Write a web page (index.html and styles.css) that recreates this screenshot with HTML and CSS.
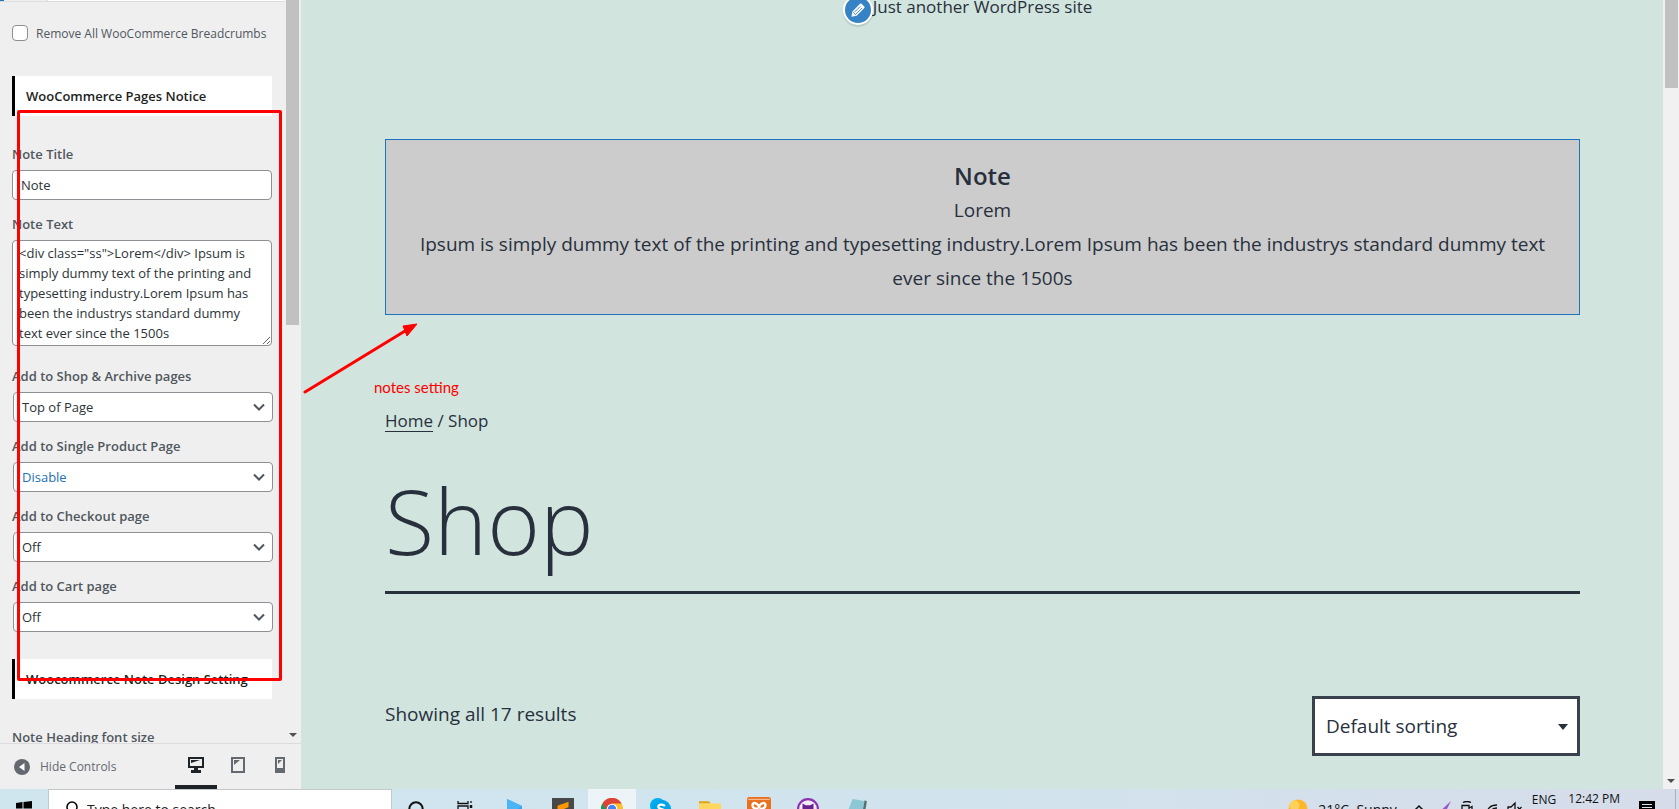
FILE: index.html
```html
<!DOCTYPE html>
<html lang="en">
<head>
<meta charset="utf-8">
<title>Customizer: Shop</title>
<link rel="stylesheet" href="styles.css">
</head>
<body>
<div class="workspace">
  <aside class="sidebar">
    <div class="panel">
      <form class="controls">
        <div class="panel-head"><span class="panel-accent"></span><span class="panel-back"></span><span class="panel-title"></span></div>
        <label class="check"><input type="checkbox" class="checkbox">Remove All WooCommerce Breadcrumbs</label>
        <h3 class="section">WooCommerce Pages Notice</h3>
        <div class="field">
          <label for="note-title">Note Title</label>
          <input id="note-title" class="box" type="text" value="Note">
        </div>
        <div class="field field-area">
          <label for="note-text">Note Text</label>
          <textarea id="note-text" class="box area" rows="5">&lt;div class="ss"&gt;Lorem&lt;/div&gt; Ipsum is simply dummy text of the printing and typesetting industry.Lorem Ipsum has been the industrys standard dummy text ever since the 1500s</textarea>
        </div>
        <div class="field">
          <label for="shop-pages">Add to Shop &amp; Archive pages</label>
          <div class="picker"><select id="shop-pages" class="box"><option>Top of Page</option></select><svg class="chevron" viewBox="0 0 12 8"><path d="M1 1.5l5 5 5-5"/></svg></div>
        </div>
        <div class="field">
          <label for="single-page">Add to Single Product Page</label>
          <div class="picker"><select id="single-page" class="box active"><option>Disable</option></select><svg class="chevron" viewBox="0 0 12 8"><path d="M1 1.5l5 5 5-5"/></svg></div>
        </div>
        <div class="field">
          <label for="checkout-page">Add to Checkout page</label>
          <div class="picker"><select id="checkout-page" class="box"><option>Off</option></select><svg class="chevron" viewBox="0 0 12 8"><path d="M1 1.5l5 5 5-5"/></svg></div>
        </div>
        <div class="field">
          <label for="cart-page">Add to Cart page</label>
          <div class="picker"><select id="cart-page" class="box"><option>Off</option></select><svg class="chevron" viewBox="0 0 12 8"><path d="M1 1.5l5 5 5-5"/></svg></div>
        </div>
        <h3 class="section">Woocommerce Note Design Setting</h3>
        <div class="field"><label for="heading-size">Note Heading font size</label><input id="heading-size" class="box" type="number"></div>
      </form>
      <div class="scroll"><div class="thumb thumb-panel"></div><svg class="scroll-down" viewBox="0 0 8 4"><path d="M0 0h8L4 4z"/></svg></div>
    </div>
    <footer class="footer">
      <button class="hide" type="button">
        <svg viewBox="0 0 16 16" width="16" height="16"><circle cx="8" cy="8" r="8" fill="#646970"/><path d="M10.500 4v8L5 8z" fill="#fff"/></svg>
        Hide Controls
      </button>
      <div class="devices">
        <button class="device current" type="button" aria-label="Desktop"><svg viewBox="0 0 16 16" width="16" height="16"><path fill="currentColor" fill-rule="evenodd" d="M0 0h16v11h-6v2h3v3H3v-3h3v-2H0zM2 2v7h12V2z"/><path fill="currentColor" d="M3 3h9L3 6z"/></svg></button>
        <button class="device" type="button" aria-label="Tablet"><svg viewBox="0 0 14 16" width="14" height="16"><path fill="currentColor" fill-rule="evenodd" d="M0 0h14v16H0zM2 2v12h10V2z"/><path fill="currentColor" d="M3 3h6L3 8z"/></svg></button>
        <button class="device" type="button" aria-label="Mobile"><svg viewBox="0 0 10 16" width="10" height="16"><path fill="currentColor" fill-rule="evenodd" d="M0 0h10v16H0zM2 2v9h6V2z"/><path fill="currentColor" d="M3 3h4L3 7z"/></svg></button>
      </div>
    </footer>
  </aside>
  <main class="preview">
    <div class="page">
      <p class="tagline"><span class="tagline-text"><button class="edit" type="button" aria-label="Edit tagline"><svg viewBox="0 0 20 20" width="18" height="18"><path fill="#fff" d="M13.900 3l3.100 3.100c.5.500.5 1.200 0 1.700L8.500 16.300 2.700 17.500l1.100-5.700L12.300 3c.4-.4 1.200-.4 1.600 0z"/><path d="M6 12.500l6.500-6.500M7.900 14.300l6.500-6.500M4.500 12.500l3.300 3.200" stroke="#3582c4" stroke-width="1" fill="none"/></svg></button>Just another WordPress site</span></p>
      <section class="notice">
        <h2 class="notice-title">Note</h2>
        <div>Lorem</div>
        Ipsum is simply dummy text of the printing and typesetting industry.Lorem Ipsum has been the industrys standard dummy text ever since the 1500s
      </section>
      <nav class="crumbs"><a href="#home">Home</a> / Shop</nav>
      <h1 class="title">Shop</h1>
      <div class="toolbar">
        <p class="count">Showing all 17 results</p>
        <div class="picker sort"><select class="sort-select" aria-label="Sort products"><option>Default sorting</option></select><svg class="caret" viewBox="0 0 10 6"><path d="M0 0h10L5 6z"/></svg></div>
      </div>
    </div>
    <div class="scroll scroll-page"><div class="thumb thumb-page"></div><svg class="scroll-down" viewBox="0 0 8 4"><path d="M0 0h8L4 4z"/></svg></div>
  </main>
</div>
<div class="taskbar">
  <div class="tasks">
    <button class="task start" type="button" aria-label="Start"><svg viewBox="0 0 16 16" width="16" height="16"><path d="M0 2l6.500-1v6.500H0zM7.500 1L16 0v7.500H7.500zM0 8.500h6.500V15L0 14zM7.500 8.500H16V16l-8.500-1z"/></svg></button>
    <div class="search"><svg viewBox="0 0 16 16" width="16" height="16" fill="none" stroke="#000" stroke-width="1.500"><circle cx="8" cy="6" r="5"/><path d="M5 10l-4 5"/></svg><input type="text" placeholder="Type here to search" aria-label="Search"></div>
    <button class="task" type="button" aria-label="Cortana"><svg viewBox="0 0 16 16" width="16" height="16"><circle cx="8" cy="8" r="6.700" fill="none" stroke="#111" stroke-width="2"/></svg></button>
    <button class="task" type="button" aria-label="Task view"><svg viewBox="0 0 16 16" width="16" height="16" fill="none" stroke="#111" stroke-width="1.300"><path d="M1 0v2.500h10V0M1 16v-2.500h10V16M1 5h10v6H1zM14 0v2M14 9v7"/><path d="M14 4v3" stroke-width="2.500"/></svg></button>
    <button class="task" type="button" aria-label="Code editor"><svg viewBox="0 0 20 20" width="20" height="20"><path d="M3 0l15 7v11L3 20z" fill="#35a7f0"/><path d="M3 0l15 7L3 16z" fill="#4db5f5"/></svg></button>
    <button class="task" type="button" aria-label="Text editor"><svg viewBox="0 0 20 20" width="22" height="22"><path d="M0 0h20v20H0z" fill="#484848"/><path d="M15 3.500v5L5 12V7zM5 10l10 3v4L5 18z" fill="#ff9800"/></svg></button>
    <button class="task open" type="button" aria-label="Browser"><svg viewBox="0 0 20 20" width="22" height="22"><circle cx="10" cy="10" r="10" fill="#fbc02d"/><path d="M1.300 5A10 10 0 0 1 18.700 5H10l-4 8z" fill="#db4437"/><path d="M1.300 5A10 10 0 0 0 10 20l4-8H6z" fill="#0f9d58"/><circle cx="10" cy="10" r="4.800" fill="#fff"/><circle cx="10" cy="10" r="3.800" fill="#4285f4"/></svg></button>
    <button class="task" type="button" aria-label="Skype"><svg viewBox="0 0 20 20" width="22" height="22"><circle cx="7" cy="7" r="7" fill="#00aff0"/><circle cx="13" cy="13" r="7" fill="#0091d8"/><circle cx="10.500" cy="10" r="8.500" fill="#00a5e8"/><path d="M13.500 7.500c-1-2-6-2-6 .500s6 1.500 6 4-5 3-6.500.5" stroke="#fff" stroke-width="2" fill="none"/></svg></button>
    <button class="task" type="button" aria-label="Files"><svg viewBox="0 0 20 20" width="22" height="22"><path d="M0 3h9l2 2H0z" fill="#e2a40b"/><path d="M0 5h20v13H0z" fill="#ffd75e"/></svg></button>
    <button class="task" type="button" aria-label="XAMPP"><svg viewBox="0 0 20 20" width="24" height="24"><rect width="20" height="20" rx="2" fill="#e8701f"/><path d="M1 2h18" stroke="#f8b98e"/><path d="M9.500 10C3 10 4 4.500 6.500 5S10 8 10 9.500C10 8 11 5.500 13.500 5s3.500 5-3 5c5 0 5 5 2.500 5s-3-3-3-4.500c0 1.500-.5 4.500-3 4.500s-2.500-5 2.500-5z" fill="none" stroke="#fff" stroke-width="2"/></svg></button>
    <button class="task" type="button" aria-label="GitHub Desktop"><svg viewBox="0 0 20 20" width="22" height="22"><circle cx="10" cy="10" r="9" fill="#f4edf9" stroke="#8a32b0" stroke-width="2"/><path d="M5 5l3 1.500h4L15 5v6c0 3-2 4-3 4v5H8v-5c-2 0-3-2-3-4z" fill="#6a2290"/></svg></button>
    <button class="task" type="button" aria-label="Notepad"><svg viewBox="0 0 20 20" width="22" height="22"><path d="M6 1l12 2-4 17L0 16z" fill="#8bc7d4"/><path d="M17 2l2 1-3 17-2-1z" fill="#55706d"/></svg></button>
  </div>
  <div class="tray">
    <svg class="sun" viewBox="0 0 20 20" width="20" height="20"><circle cx="10" cy="10" r="9.500" fill="#ffb629"/><circle cx="6.500" cy="6.500" r="5" fill="#ffd257"/></svg>
    <span class="weather">21°C&nbsp; Sunny</span>
    <div class="tray-icons">
      <svg viewBox="0 0 16 16" width="16" height="16" fill="none" stroke="#111" stroke-width="1.500"><path d="M3 10l5-5 5 5"/></svg>
      <svg viewBox="0 0 16 16" width="16" height="16"><path d="M16 0L1 14h8z" fill="#9559c7"/></svg>
      <svg viewBox="0 0 16 16" width="16" height="16" fill="none" stroke="#111" stroke-width="1.300"><path d="M4 1.500q4-2 8 0M3 4.500h7v9H3zM10 7l3-1.500v7L10 11"/></svg>
      <svg viewBox="0 0 16 16" width="16" height="16" fill="none" stroke="#111" stroke-width="1.300"><path d="M4 14Q4 4 14 4M7 14q0-7 7-7M10 14q0-4 4-4"/></svg>
      <svg viewBox="0 0 16 16" width="16" height="16" fill="none" stroke="#111" stroke-width="1.300"><path d="M1 6h3l4-4v12l-4-4H1zM10.500 6l4 4M14.500 6l-4 4"/></svg>
    </div>
    <span class="lang">ENG</span>
    <span class="clock">12:42 PM</span>
    <svg class="messages" viewBox="0 0 16 16" width="16" height="16"><path d="M0 0h16v12H9l-4 4v-4H0z"/><path d="M3 3.500h10M3 6.500h10M3 9.500h7" stroke="#dce3f0"/></svg>
    <span class="peek"></span>
  </div>
</div>
<div class="mark-frame"></div>
<svg class="mark-arrow" viewBox="0 0 116 72" width="116" height="72"><path d="M2 70L102 9" stroke="#f00" stroke-width="3" stroke-linecap="round"/><path d="M114 2l-14 2 2 5 2 5z" fill="#f00" stroke="#f00"/></svg>
<div class="mark-text">notes setting</div>
</body>
</html>
```
FILE: styles.css
```css
* { box-sizing: border-box; }
body {
  margin: 0;
  height: 100vh;
  display: flex;
  flex-direction: column;
  overflow: hidden;
  position: relative;
  font-family: "Open Sans", "Noto Sans", sans-serif;
  font-size: 13px;
}
h1, h2, h3, p { margin: 0; }
button, input, select, textarea { font: inherit; margin: 0; }
button { border: 0; padding: 0; background: none; }

.workspace { flex: 1; min-height: 0; display: flex; }

/* Sidebar */
.sidebar {
  flex: 0 0 301px;
  min-width: 0;
  display: flex;
  flex-direction: column;
  background: #efefef;
  color: #50575e;
}
.panel { flex: 1; min-height: 0; display: flex; overflow: hidden; }
.controls { flex: 1; min-width: 0; padding: 0 14px 0 12px; }
.panel-head {
  display: flex;
  height: 2px;
  margin: 0 -12px 23px;
  border-bottom: 1px solid #dcdcde;
  background: #fff;
}
.panel-accent { width: 4px; background: #2271b1; }
.panel-back { width: 44px; background: #efefef; border-right: 1px solid #dcdcde; }
.check {
  display: flex;
  align-items: center;
  gap: 8px;
  height: 16px;
  margin-bottom: 35px;
  font-size: 12px;
  white-space: nowrap;
}
.checkbox {
  appearance: none;
  flex: none;
  width: 16px;
  height: 16px;
  border: 1px solid #8c8f94;
  border-radius: 4px;
  background: #fff;
}
.section {
  margin-bottom: 28px;
  padding: 10px 11px;
  border-left: 3px solid #000;
  background: #fff;
  color: #1d1f22;
  font-size: 13px;
  font-weight: 600;
  line-height: 20px;
  white-space: nowrap;
}
.field {
  display: flex;
  flex-direction: column;
  gap: 6px;
  margin-bottom: 14px;
  font-size: 13px;
  line-height: 20px;
}
.field label { font-weight: 600; }
.field + .section { margin-top: 27px; }
.field-area { margin-bottom: 20px; }
.box {
  width: 100%;
  height: 30px;
  padding: 0 8px;
  border: 1px solid #8c8f94;
  border-radius: 4px;
  background: #fff;
  color: #2c3338;
}
.area { height: 106px; padding: 2px 6px; line-height: 20px; overflow: hidden; resize: vertical; }
.picker { position: relative; display: flex; }
.field .picker { margin: 0 -1px 0 1px; }
.picker select { appearance: none; }
.picker .active { color: #2271b1; }
.chevron {
  position: absolute;
  right: 8px;
  top: 11px;
  width: 12px;
  height: 8px;
  fill: none;
  stroke: #50575e;
  stroke-width: 2;
  pointer-events: none;
}
.scroll {
  flex: 0 0 15px;
  display: flex;
  flex-direction: column;
  justify-content: space-between;
  align-items: center;
  padding: 0 2px 6px 0;
}
.thumb { width: 13px; background: #c1c1c1; }
.thumb-panel { height: 325px; }
.scroll-down { width: 8px; height: 4px; fill: #505050; }

.footer {
  display: flex;
  justify-content: space-between;
  height: 46px;
  border-top: 1px solid #dcdcde;
}
.hide { display: flex; align-items: center; gap: 10px; padding-left: 14px; color: #646970; font-size: 12px; white-space: nowrap; }
.devices { display: flex; }
.device {
  display: grid;
  place-items: center;
  width: 42px;
  border-bottom: 4px solid transparent;
  color: #646970;
}
.current { color: #1d2327; border-color: #1d2327; }

/* Store preview */
.preview {
  flex: 1;
  min-width: 0;
  display: flex;
  background: #d1e4dd;
  color: #28303d;
}
.page { flex: 1; min-width: 0; padding: 0 83px 0 84px; overflow: hidden; }
.tagline { font-size: 17px; line-height: 14px; text-align: center; }
.tagline-text { position: relative; }
.edit {
  position: absolute;
  right: 100%;
  top: 0;
  display: grid;
  place-items: center;
  width: 30px;
  height: 30px;
  border: 2px solid #fff;
  border-radius: 50%;
  background: #3582c4;
  box-shadow: 0 2px 1px rgba(46, 68, 83, 0.15);
}
.notice {
  margin-top: 125px;
  padding: 19px 24px;
  border: 1px solid #1e73be;
  background: #ccc;
  font-size: 19px;
  line-height: 34px;
  text-align: center;
}
.notice-title { font-size: 24px; font-weight: 600; line-height: 34px; }
.crumbs { margin-top: 91px; font-size: 17px; line-height: 30px; }
.crumbs a { color: inherit; text-underline-offset: 4px; text-decoration-thickness: 1px; }
.title {
  margin-top: 28px;
  padding-bottom: 15px;
  border-bottom: 3px solid #28303d;
  font-size: 90px;
  font-weight: 300;
  line-height: 112px;
}
.toolbar { display: flex; justify-content: space-between; margin-top: 102px; }
.count { font-size: 19px; line-height: 36px; }
.sort { width: 268px; }
.sort-select {
  width: 100%;
  height: 60px;
  padding: 0 11px;
  border: 3px solid #39414d;
  border-radius: 0;
  background: #fff;
  color: #28303d;
  font-size: 19px;
}
.caret { position: absolute; right: 12px; top: 28px; width: 10px; height: 6px; fill: #28303d; pointer-events: none; }
.scroll-page { flex-basis: 16px; padding: 0 0 6px; background: #f1f1f1; }
.thumb-page { height: 88px; }

/* Taskbar */
.taskbar {
  flex: none;
  display: flex;
  justify-content: space-between;
  height: 20px;
  overflow: hidden;
  background: linear-gradient(90deg, #cfe6ef, #d1e4ee 55%, #d6dcea);
  color: #111;
}
.tasks { display: flex; height: 40px; }
.task { display: grid; place-items: center; width: 48px; margin-right: 1px; }
.start { margin: 0; }
.open { background: #ecf4f8; }
.search {
  display: flex;
  align-items: center;
  gap: 7px;
  width: 344px;
  padding-left: 15px;
  border: 1px solid #c4c8ca;
  background: #fff;
}
.search input { flex: 1; min-width: 0; border: 0; padding: 0; font-size: 14px; }
.search input::placeholder { color: #222; }
.tray { display: flex; align-items: center; height: 40px; font-size: 12px; }
.weather { margin: 0 14px 0 10px; font-size: 14px; white-space: nowrap; }
.tray-icons { display: flex; gap: 8px; }
.lang { align-self: flex-start; margin-left: 9px; line-height: 22px; }
.clock { align-self: flex-start; margin-left: 12px; line-height: 20px; white-space: nowrap; }
.messages { margin-left: 19px; }
.peek { height: 40px; margin-left: 20px; width: 4px; border-left: 1px solid #a9b2c2; }

/* Annotations drawn over the page */
.mark-frame {
  position: absolute;
  left: 17px;
  top: 110px;
  width: 265px;
  height: 571px;
  border: 3px solid #f00;
  border-radius: 2px;
  pointer-events: none;
}
.mark-arrow { position: absolute; left: 303px; top: 322px; pointer-events: none; }
.mark-text {
  position: absolute;
  left: 374px;
  top: 377px;
  color: #f00;
  font-family: Lato, sans-serif;
  font-size: 15px;
  line-height: 20px;
}
```
